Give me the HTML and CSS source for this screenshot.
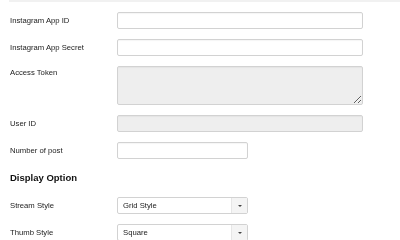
FILE: index.html
```html
<!DOCTYPE html>
<html>
<head>
<meta charset="utf-8">
<link rel="stylesheet" href="styles.css">
</head>
<body>
<div class="topbar"></div>
<div class="form">
  <div class="row">
    <label class="label">Instagram App ID</label>
    <input class="field wide" type="text">
  </div>
  <div class="row">
    <label class="label">Instagram App Secret</label>
    <input class="field wide" type="text">
  </div>
  <div class="row">
    <label class="label label-top">Access Token</label>
    <textarea class="field wide area" readonly></textarea>
  </div>
  <div class="row">
    <label class="label">User ID</label>
    <input class="field wide disabled" type="text" readonly>
  </div>
  <div class="row">
    <label class="label">Number of post</label>
    <input class="field short" type="text">
  </div>
  <h3 class="section">Display Option</h3>
  <div class="row">
    <label class="label">Stream Style</label>
    <div class="select short">
      <span class="select-value">Grid Style</span>
      <span class="select-arrow"><svg width="4" height="2" viewBox="0 0 4 2"><path d="M0 0H4L2 2Z" fill="#444"/></svg></span>
    </div>
  </div>
  <div class="row">
    <label class="label">Thumb Style</label>
    <div class="select short">
      <span class="select-value">Square</span>
      <span class="select-arrow"><svg width="4" height="2" viewBox="0 0 4 2"><path d="M0 0H4L2 2Z" fill="#444"/></svg></span>
    </div>
  </div>
</div>
</body>
</html>
```
FILE: styles.css
```css
html, body {
  margin: 0;
  padding: 0;
  background: #fff;
}
body {
  font-family: "Liberation Sans", Arial, sans-serif;
  color: #222;
  width: 400px;
  height: 240px;
  overflow: hidden;
}
.topbar {
  height: 2px;
  margin-left: 9px;
  background: #f1f1f1;
}
.form {
  padding: 10px 0 0 10px;
  display: flex;
  flex-direction: column;
  gap: 10px;
  will-change: opacity;
  opacity: 0.999;
}
.row {
  display: grid;
  grid-template-columns: 107px auto;
  align-items: start;
}
.label {
  font-size: 7.7px;
  line-height: 17px;
  color: #222;
}
.label-top {
  line-height: 14px;
}
.field {
  box-sizing: border-box;
  height: 17px;
  margin: 0;
  padding: 0 5px;
  border: 1px solid #d2d2d2;
  border-radius: 2px;
  background: #fff;
  font-family: inherit;
  font-size: 7.7px;
  color: #222;
  outline: none;
  box-shadow: inset 0 1px 1px rgba(0,0,0,0.04);
}
.wide { width: 246px; }
.short { width: 131px; }
.area {
  height: 39px;
  background: #eeeeee;
  resize: both;
  display: block;
}
.disabled {
  background: #eeeeee;
}
.section {
  margin: 3px 0 3px 0;
  font-size: 9.5px;
  line-height: 12px;
  font-weight: bold;
  color: #111;
}
.select {
  box-sizing: border-box;
  height: 17px;
  display: flex;
  border: 1px solid #d2d2d2;
  border-radius: 2px;
  background: #fff;
  font-size: 7.7px;
  color: #222;
}
.select-value {
  flex: 1;
  line-height: 15px;
  padding-left: 5px;
}
.select-arrow {
  width: 15px;
  border-left: 1px solid #e6e6e6;
  background: #f4f4f4;
  display: flex;
  align-items: center;
  justify-content: center;
}
.select-arrow svg {
  display: block;
  margin-left: 1px;
}
```
